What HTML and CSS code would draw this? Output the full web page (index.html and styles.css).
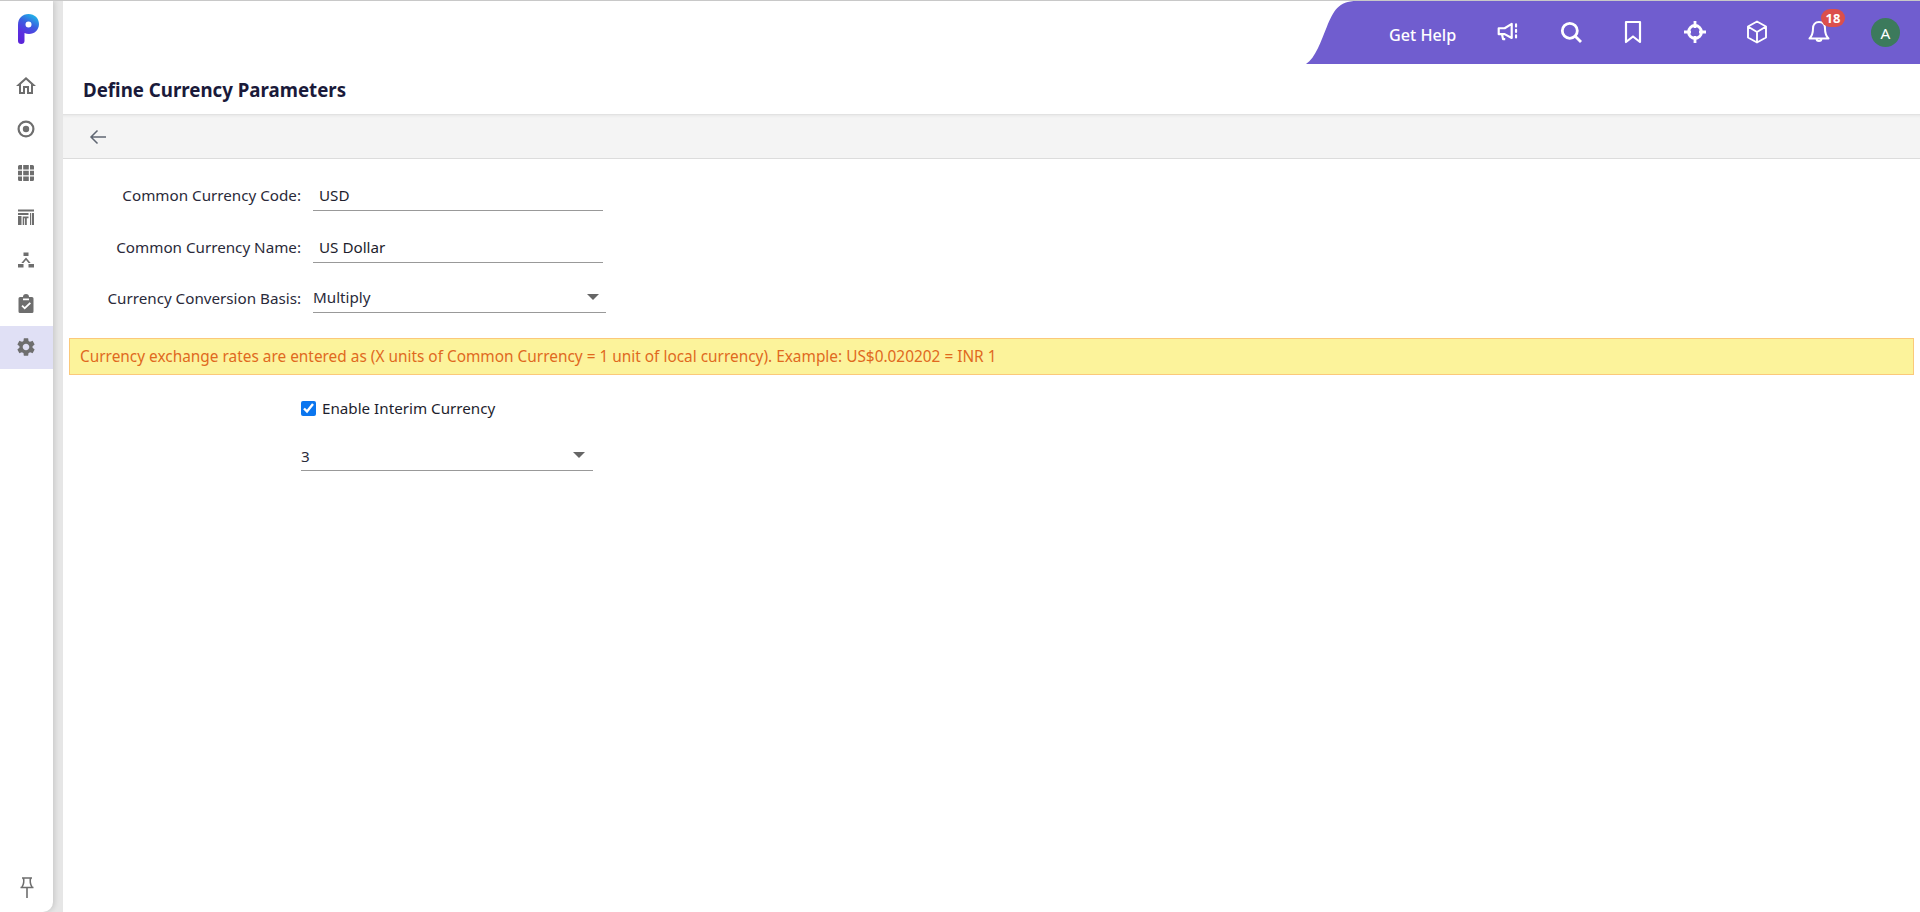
FILE: index.html
```html
<!DOCTYPE html>
<html lang="en">
<head>
  <meta charset="UTF-8" />
  <title>Define Currency Parameters</title>
  <link rel="stylesheet" href="styles.css">
</head>
<body>

  <!-- Sidebar -->
  <div class="sidebar">
    <div class="logo">
      <svg width="24" height="32" viewBox="0 0 24 32">
        <defs>
          <linearGradient id="logoGrad" x1="0.7" y1="0" x2="0.3" y2="1">
            <stop offset="0" stop-color="#1fb6e8"/>
            <stop offset="0.35" stop-color="#3a5fe0"/>
            <stop offset="0.7" stop-color="#5b2fe0"/>
            <stop offset="1" stop-color="#5a25d8"/>
          </linearGradient>
        </defs>
        <path fill="url(#logoGrad)" fill-rule="evenodd" d="M2 12C2 5 6.500 1 12.500 1C18.500 1 23 5.200 23 11C23 17 18.500 21 13 21C11.500 21 10 20.700 8.500 20V28C8.500 30 7.200 31 5.300 31C3.300 31 2 30 2 28ZM12.500 8.500A3 3 0 1 0 12.500 14.500A3 3 0 1 0 12.500 8.500Z"/>
      </svg>
    </div>
    <div class="side-item">
      <svg width="24" height="24" viewBox="0 0 24 24"><path d="M12 5.690l5 4.500V18h-2v-6H9v6H7v-7.810l5-4.500M12 3L2 12h3v8h6v-6h2v6h6v-8h3L12 3z"/></svg>
    </div>
    <div class="side-item">
      <svg width="20" height="20" viewBox="0 0 20 20"><path fill-rule="evenodd" d="M10 1.500a8.500 8.500 0 1 0 0 17a8.500 8.500 0 1 0 0-17zM10 3.700a6.300 6.300 0 1 1 0 12.600a6.300 6.300 0 1 1 0-12.600z"/><circle cx="10" cy="10" r="3.200"/></svg>
    </div>
    <div class="side-item">
      <svg width="18" height="18" viewBox="0 0 18 18"><path d="M1 2.500A1.500 1.500 0 0 1 2.500 1H5v4.600H1zM6.200 1h5.600v4.600H6.200zM13 1h2.500A1.500 1.500 0 0 1 17 2.500v3.100h-4zM1 6.800h4v4.400H1zM6.200 6.800h5.600v4.400H6.200zM13 6.800h4v4.400h-4zM1 12.400h4V17H2.500A1.500 1.500 0 0 1 1 15.500zM6.200 12.400h5.600V17H6.200zM13 12.400h4v3.100a1.500 1.500 0 0 1-1.500 1.500H13z"/></svg>
    </div>
    <div class="side-item">
      <svg width="18" height="18" viewBox="0 0 18 18"><path d="M1 1.500h16v2H1zM1 5h10.500v2H1zM1 8h3.500v9H1zM5.700 8.500h5.800v1.800H9.800V17H8v-6.700H7.200V17H5.700zM13 5h1.200v12H13zM15 5h2v12h-2z"/></svg>
    </div>
    <div class="side-item">
      <svg width="18" height="18" viewBox="0 0 18 18"><path d="M6.500 1.500h5v3.500h-5zM1 13h5.500v3.500H1zM11.500 13H17v3.500h-5.500zM9 6.500l4.700 5.500h-2.200L9 9 6.500 12H4.300z"/></svg>
    </div>
    <div class="side-item">
      <svg width="18" height="20" viewBox="0 0 18 20"><path fill-rule="evenodd" d="M3 3h3a3 3 0 0 1 6 0h3a1.500 1.500 0 0 1 1.500 1.500v13A1.500 1.500 0 0 1 15 19H3a1.500 1.500 0 0 1-1.500-1.500v-13A1.500 1.500 0 0 1 3 3zM6 4.500v1.800h6V4.500zM7.700 15.500l6.300-6-1.300-1.300-5 4.700-2-1.900L4.400 12.300z"/></svg>
    </div>
    <div class="side-item active">
      <svg width="22" height="22" viewBox="0 0 24 24"><path d="M19.140 12.940c.04-.3.060-.61.060-.94 0-.32-.02-.64-.07-.94l2.030-1.580c.18-.14.230-.41.120-.61l-1.920-3.320c-.12-.22-.37-.29-.59-.22l-2.390.96c-.5-.38-1.030-.7-1.620-.94l-.36-2.540c-.04-.24-.24-.41-.48-.41h-3.840c-.24 0-.43.170-.47.410l-.36 2.540c-.59.240-1.130.570-1.620.940l-2.390-.96c-.22-.08-.47 0-.59.220L2.740 8.870c-.12.210-.08.470.120.610l2.030 1.580c-.05.3-.09.630-.09.940s.02.640.07.940l-2.030 1.580c-.18.140-.23.410-.12.610l1.920 3.320c.12.220.37.290.59.220l2.390-.96c.5.380 1.030.7 1.620.94l.36 2.540c.05.240.24.410.48.410h3.840c.24 0 .44-.17.47-.41l.36-2.540c.59-.24 1.130-.56 1.620-.94l2.390.96c.22.080.47 0 .59-.22l1.920-3.320c.12-.22.070-.47-.12-.61l-2.010-1.580zM12 15.600c-1.980 0-3.600-1.620-3.600-3.600s1.620-3.600 3.600-3.600 3.600 1.620 3.600 3.600-1.620 3.600-3.600 3.600z"/></svg>
    </div>
    <div class="side-pin">
      <svg width="16" height="24" viewBox="0 0 16 24" fill="none" stroke="#6e6e6e" stroke-width="1.600"><path d="M3 2h10M4.500 2c.6 3 .4 6-1.500 9M11.500 2c-.6 3-.4 6 1.500 9M1.500 11.500h13M8 12v10"/></svg>
    </div>
  </div>

  <!-- Main -->
  <div class="main">
    <div class="topbar">
      <svg class="tab-curve" width="51" height="63" viewBox="0 0 54 63" preserveAspectRatio="none"><path fill="#705dcf" d="M0 63C10 57 16 40 22 26C29 10 34 0 54 0V63Z"/></svg>
      <div class="tab">
        <span class="get-help">Get Help</span>
        <span class="top-icon">
          <svg width="26" height="26" viewBox="0 0 24 24" fill="none" stroke="#fff" stroke-width="2" stroke-linejoin="round"><path d="M2.500 8.500h5.500L14.500 4.500v13L8 14H2.500zM5.500 14l1 4.500h2"/><path d="M18.500 5v2M18.500 10v2M18.500 15v2" stroke-linecap="round"/></svg>
        </span>
        <span class="top-icon">
          <svg width="24" height="24" viewBox="0 0 24 24" fill="none" stroke="#fff" stroke-width="2.800"><circle cx="10.800" cy="10.800" r="7.500"/><path d="M16 16l6 6"/></svg>
        </span>
        <span class="top-icon">
          <svg width="24" height="24" viewBox="0 0 24 24" fill="none" stroke="#fff" stroke-width="2.200" stroke-linejoin="round"><path d="M5 2h14v20L12 16.500 5 22z"/></svg>
        </span>
        <span class="top-icon">
          <svg width="24" height="24" viewBox="0 0 24 24" fill="none" stroke="#fff" stroke-width="2.800"><circle cx="12" cy="12" r="6.500"/><path d="M12 1v7M12 16v7M1 12h7M16 12h7"/></svg>
        </span>
        <span class="top-icon">
          <svg width="24" height="24" viewBox="0 0 24 24" fill="none" stroke="#fff" stroke-width="1.900" stroke-linejoin="round"><path d="M12 1.500l9 5v11l-9 5-9-5v-11zM3.300 6.700L12 12l8.700-5.300M12 12v10.500"/></svg>
        </span>
        <span class="top-icon bell">
          <svg width="24" height="24" viewBox="0 0 24 24" fill="none" stroke="#fff" stroke-width="2" stroke-linejoin="round"><path d="M12 2c-4 0-6 3-6 6.500 0 4.500-1 7.500-3.500 10h19c-2.500-2.500-3.500-5.500-3.500-10C18 5 16 2 12 2zM9.500 18.500a2.500 2.500 0 0 0 5 0"/></svg>
          <span class="badge">18</span>
        </span>
        <span class="avatar">A</span>
      </div>
    </div>

    <div class="page-title">Define Currency Parameters</div>

    <div class="toolbar">
      <svg class="back" width="20" height="20" viewBox="0 0 20 20" fill="none" stroke="#5f6672" stroke-width="1.500"><path d="M18 10H3M9.500 3.500L3 10l6.500 6.500"/></svg>
    </div>

    <div class="form">
      <div class="row row-code">
        <label>Common Currency Code:</label>
        <div class="field">USD</div>
      </div>
      <div class="row row-name">
        <label>Common Currency Name:</label>
        <div class="field">US Dollar</div>
      </div>
      <div class="row row-basis">
        <label>Currency Conversion Basis:</label>
        <div class="select select-basis">Multiply<span class="caret"></span></div>
      </div>

      <div class="notice">Currency exchange rates are entered as (X units of Common Currency = 1 unit of local currency). Example: US$0.020202 = INR 1</div>

      <div class="interim">
        <label class="check"><input type="checkbox" checked> Enable Interim Currency</label>
        <div class="select select-interim">3<span class="caret"></span></div>
      </div>
    </div>
  </div>

</body>
</html>
```

FILE: styles.css
```css
html, body {
  height: 100%;
}

body {
  margin: 0;
  padding: 0;
  display: flex;
  height: 912px;
  overflow: hidden;
  font-family: "Noto Sans", "Open Sans", sans-serif;
  font-size: 15.200px;
  color: #1e1e2d;
  background: #e6e6e6;
  border-top: 1px solid #c8c8c8;
  box-sizing: border-box;
}

/* Sidebar */
.sidebar {
  width: 53px;
  flex-shrink: 0;
  background: #fff;
  border-bottom-right-radius: 10px;
  box-shadow: 2px 0 5px rgba(0,0,0,0.12);
  display: flex;
  flex-direction: column;
  position: relative;
}

.logo {
  height: 63px;
  display: flex;
  justify-content: center;
  align-items: flex-start;
  padding-top: 12px;
  padding-left: 3px;
  box-sizing: border-box;
}

.side-item {
  height: 43.600px;
  display: flex;
  align-items: center;
  justify-content: center;
  padding-right: 2px;
}

.side-item svg {
  fill: #6e6e6e;
}

.side-item.active {
  background: #e0e0f5;
}

.side-pin {
  margin-top: auto;
  height: 36px;
  display: flex;
  justify-content: center;
}

/* Main */
.main {
  flex: 1;
  margin-left: 10px;
  background: #fff;
  display: flex;
  flex-direction: column;
}

.topbar {
  height: 63px;
  display: flex;
  justify-content: flex-end;
}

.tab-curve {
  display: block;
  margin-right: -1px;
}

.tab {
  width: 564px;
  background: #705dcf;
  display: flex;
  align-items: center;
  color: #fff;
  padding-left: 33px;
  box-sizing: border-box;
}

.get-help {
  width: 67px;
  margin-top: 4px;
  font-weight: 500;
  font-size: 16.200px;
  white-space: nowrap;
  margin-right: 22px;
}

.top-icon {
  width: 62px;
  display: flex;
  justify-content: center;
  margin-top: -1px;
  position: relative;
}

.badge {
  position: absolute;
  top: -11px;
  left: 33px;
  background: #db4f4c;
  color: #fff;
  font-size: 13px;
  font-weight: 700;
  line-height: 18px;
  width: 24px;
  text-align: center;
  border-radius: 9px;
}

.avatar {
  width: 29px;
  height: 29px;
  border-radius: 50%;
  background: #3c7a5c;
  color: #fff;
  margin-left: 21px;
  text-align: center;
  line-height: 30px;
  font-size: 15.300px;
}

.page-title {
  height: 50px;
  line-height: 52px;
  padding-left: 20px;
  font-size: 18.700px;
  font-weight: 700;
  color: #1a1a3a;
}

.toolbar {
  height: 45px;
  background: #f4f4f4;
  border-top: 1px solid #e2e2e2;
  border-bottom: 1px solid #dcdcdc;
  box-sizing: border-box;
  display: flex;
  align-items: center;
  padding-left: 25px;
  box-shadow: inset 0 3px 3px -2px rgba(0,0,0,0.06);
}

.back {
  margin-top: 1px;
}

/* Form */
.form {
  padding: 21px 6px 0;
  line-height: 20px;
}

.row {
  display: flex;
  height: 31px;
  margin-bottom: 21px;
}

.row label {
  width: 232px;
  text-align: right;
  align-self: flex-end;
  padding-bottom: 6px;
  color: #2a2a3a;
  white-space: nowrap;
}

.field {
  width: 290px;
  margin-left: 12px;
  border-bottom: 1px solid #999;
  padding: 4px 0 5px 6px;
  box-sizing: border-box;
  align-self: stretch;
  display: flex;
  align-items: center;
}

.select {
  position: relative;
  border-bottom: 1px solid #999;
  box-sizing: border-box;
  height: 30px;
  padding-top: 5px;
  color: #2a2a3a;
}

.select-basis {
  width: 293px;
  margin-left: 12px;
  height: 29px;
  padding-top: 3px;
}

.select-interim {
  width: 292px;
}

.caret {
  position: absolute;
  right: 7px;
  top: 10px;
  width: 0;
  height: 0;
  border-left: 6.500px solid transparent;
  border-right: 6.500px solid transparent;
  border-top: 6.500px solid #666;
}

.select-interim .caret {
  right: 8px;
  top: 11px;
}

.row-basis {
  margin-bottom: 25px;
  height: 29px;
}

.row-basis label {
  padding-bottom: 5px;
}

.notice {
  height: 37px;
  box-sizing: border-box;
  background: #fcf39b;
  border: 1px solid #fbc97a;
  color: #e0691e;
  line-height: 35px;
  padding-left: 10px;
  font-size: 15.400px;
}

.interim {
  padding-left: 232px;
}

.check {
  display: flex;
  align-items: center;
  height: 20px;
  margin-top: 23px;
  margin-bottom: 23px;
  gap: 6px;
}

.check input {
  margin: 0;
  width: 15px;
  height: 15px;
  accent-color: #0b76ef;
}
```
